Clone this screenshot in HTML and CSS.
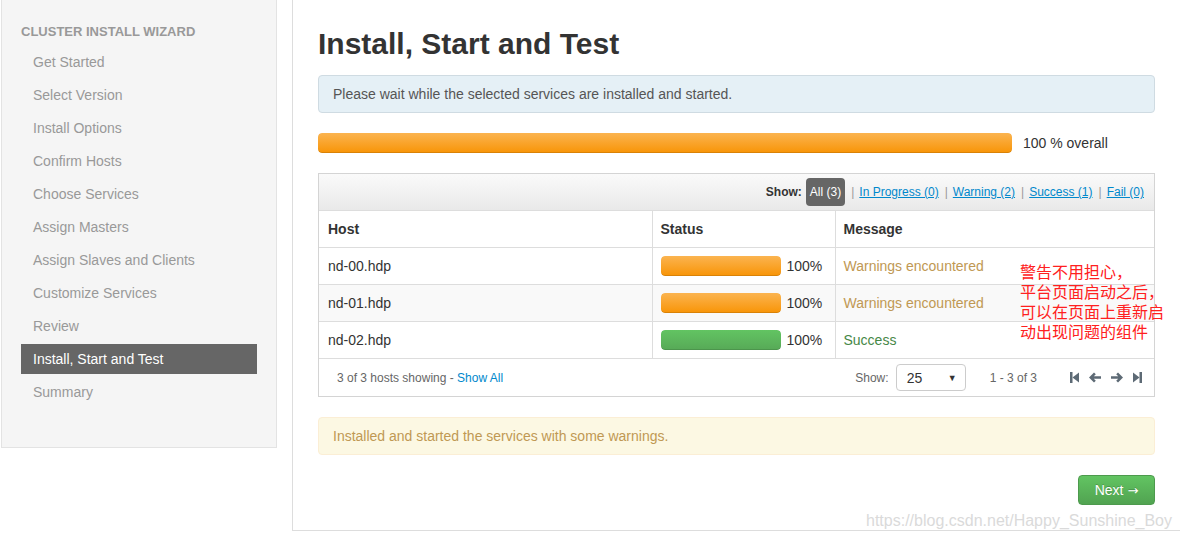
FILE: index.html
```html
<!DOCTYPE html>
<html lang="en">
<head>
<meta charset="utf-8">
<title>Install, Start and Test</title>
<link rel="stylesheet" href="styles.css">
</head>
<body>
<div class="page">
  <aside class="sidebar">
    <div class="nav-header">Cluster Install Wizard</div>
    <ul class="nav">
      <li>Get Started</li>
      <li>Select Version</li>
      <li>Install Options</li>
      <li>Confirm Hosts</li>
      <li>Choose Services</li>
      <li>Assign Masters</li>
      <li>Assign Slaves and Clients</li>
      <li>Customize Services</li>
      <li>Review</li>
      <li class="active">Install, Start and Test</li>
      <li>Summary</li>
    </ul>
  </aside>

  <main class="content">
    <h2 class="title">Install, Start and Test</h2>
    <div class="alert alert-info">Please wait while the selected services are installed and started.</div>

    <div class="overall">
      <div class="progress"><div class="bar bar-warning" style="width:100%"></div></div>
      <span class="overall-label">100 % overall</span>
    </div>

    <div class="hosts-box">
      <div class="filter-bar">
        <span class="filter-label">Show:</span>
        <span class="pill">All (3)</span>
        <span class="sep">|</span><a href="#" class="filter-link">In Progress (0)</a>
        <span class="sep">|</span><a href="#" class="filter-link">Warning (2)</a>
        <span class="sep">|</span><a href="#" class="filter-link">Success (1)</a>
        <span class="sep">|</span><a href="#" class="filter-link">Fail (0)</a>
      </div>
      <table class="hosts">
        <colgroup><col class="col-host"><col class="col-status"><col></colgroup>
        <thead>
          <tr><th>Host</th><th>Status</th><th>Message</th></tr>
        </thead>
        <tbody>
          <tr>
            <td>nd-00.hdp</td>
            <td><div class="status"><div class="progress small"><div class="bar bar-warning" style="width:100%"></div></div><span>100%</span></div></td>
            <td class="msg-warning">Warnings encountered</td>
          </tr>
          <tr class="striped">
            <td>nd-01.hdp</td>
            <td><div class="status"><div class="progress small"><div class="bar bar-warning" style="width:100%"></div></div><span>100%</span></div></td>
            <td class="msg-warning">Warnings encountered</td>
          </tr>
          <tr>
            <td>nd-02.hdp</td>
            <td><div class="status"><div class="progress small"><div class="bar bar-success" style="width:100%"></div></div><span>100%</span></div></td>
            <td class="msg-success">Success</td>
          </tr>
        </tbody>
      </table>
      <div class="table-foot">
        <div class="showing">3 of 3 hosts showing - <a href="#">Show All</a></div>
        <div class="pager">
          <span class="pager-label">Show:</span>
          <div class="select"><span>25</span><span class="caret">&#9660;</span></div>
          <span class="range">1 - 3 of 3</span>
          <span class="pager-icons">
            <svg width="9" height="11" viewBox="0 0 9 11"><rect x="0" y="0" width="2.5" height="11" fill="currentColor"/><polygon points="2.5,5.5 9,0.5 9,10.5" fill="currentColor"/></svg>
            <svg width="12" height="11" viewBox="0 0 12 11"><path d="M0 5.5 L5 0.5 L6.8 2.3 L4.8 4.2 H12 V6.8 H4.8 L6.8 8.7 L5 10.5 Z" fill="currentColor"/></svg>
            <svg width="12" height="11" viewBox="0 0 12 11"><path d="M12 5.5 L7 0.5 L5.2 2.3 L7.2 4.2 H0 V6.8 H7.2 L5.2 8.7 L7 10.5 Z" fill="currentColor"/></svg>
            <svg width="9" height="11" viewBox="0 0 9 11"><polygon points="0,0.5 6.5,5.5 0,10.5" fill="currentColor"/><rect x="6.5" y="0" width="2.5" height="11" fill="currentColor"/></svg>
          </span>
        </div>
      </div>
    </div>

    <div class="alert alert-warning">Installed and started the services with some warnings.</div>

    <div class="actions"><button class="btn-next" type="button">Next <span class="arrow">&rarr;</span></button></div>

    <div class="note">警告不用担心，<br>平台页面启动之后，<br>可以在页面上重新启<br>动出现问题的组件</div>
    <div class="watermark">https://blog.csdn.net/Happy_Sunshine_Boy</div>
  </main>
</div>
</body>
</html>
```
FILE: styles.css
```css
* { box-sizing: border-box; }

body {
  margin: 0;
  font-family: "Liberation Sans", Arial, sans-serif;
  font-size: 14px;
  color: #333;
  background: #fff;
}

.page {
  display: flex;
  align-items: flex-start;
}

/* Sidebar */
.sidebar {
  width: 276px;
  margin-left: 1px;
  background: #f5f5f5;
  border: 1px solid #e3e3e3;
  border-top: none;
  padding: 22px 19px 37px;
}
.nav-header {
  font-size: 13px;
  font-weight: bold;
  color: #999;
  line-height: 20px;
  margin-bottom: 5px;
  text-transform: uppercase;
}
.nav {
  list-style: none;
  margin: 0;
  padding: 0;
}
.nav li {
  height: 30px;
  line-height: 30px;
  padding: 0 12px;
  margin-bottom: 3px;
  color: #999;
}
.nav li.active {
  background: #666;
  color: #fff;
}

/* Main */
.content {
  flex: 1;
  margin-left: 15px;
  border-left: 1px solid #ddd;
  border-bottom: 1px solid #ddd;
  padding: 24px 25px 25px;
  position: relative;
}
.title {
  margin: 0 0 11px;
  font-size: 30px;
  line-height: 40px;
  font-weight: bold;
  color: #333;
}

.alert {
  border: 1px solid;
  border-radius: 4px;
  padding: 8px 14px;
  line-height: 20px;
}
.alert-info {
  background: #e5f0f6;
  border-color: #cfdbe2;
  color: #555;
}
.alert-warning {
  background: #fcf8e3;
  border-color: #fbeed5;
  color: #c09853;
  margin-top: 20px;
}

.overall {
  display: flex;
  align-items: center;
  margin-top: 20px;
}
.overall .progress {
  flex: 1;
}
.overall-label {
  width: 143px;
  padding-left: 11px;
  line-height: 20px;
}

.progress {
  height: 20px;
  border-radius: 4px;
  background: #f5f5f5;
  overflow: hidden;
}
.bar {
  height: 100%;
  border-radius: 4px;
}
.bar-warning {
  background: linear-gradient(to bottom, #fbb450, #f89406);
  box-shadow: inset 0 -1px 0 rgba(0,0,0,0.12);
}
.bar-success {
  background: linear-gradient(to bottom, #62c462, #57a957);
  box-shadow: inset 0 -1px 0 rgba(0,0,0,0.12);
}

/* Hosts box */
.hosts-box {
  margin-top: 20px;
  border: 1px solid #d4d4d4;
}
.filter-bar {
  height: 37px;
  display: flex;
  align-items: center;
  justify-content: flex-end;
  padding-right: 10px;
  background: linear-gradient(to bottom, #fafafa, #e9e9e9);
  border-bottom: 1px solid #ddd;
  font-size: 12px;
}
.filter-label {
  font-weight: bold;
  color: #333;
  margin-right: 4px;
}
.pill {
  background: #666;
  color: #fff;
  border-radius: 4px;
  line-height: 28px;
  padding: 0 4px;
}
.sep {
  color: #999;
  margin: 0 5px 0 6px;
}
.filter-link {
  color: #0088cc;
  text-decoration: underline;
}

.hosts {
  width: 100%;
  border-collapse: collapse;
  table-layout: fixed;
}
.col-host { width: 333px; }
.col-status { width: 183px; }
.hosts th,
.hosts td {
  text-align: left;
  padding: 8px;
  line-height: 20px;
  border-bottom: 1px solid #ddd;
  border-left: 1px solid #ddd;
  white-space: nowrap;
}
.hosts th:first-child,
.hosts td:first-child {
  border-left: none;
  padding-left: 9px;
}
.hosts th { font-weight: bold; }
.hosts tr.striped td { background: #f9f9f9; }
.status {
  display: flex;
  align-items: center;
}
.progress.small {
  width: 120px;
  margin-right: 6px;
}
.msg-warning { color: #c09853; }
.msg-success { color: #468847; }

.table-foot {
  height: 37px;
  display: flex;
  align-items: center;
  justify-content: space-between;
  padding: 0 12px 0 18px;
  font-size: 12px;
  color: #666;
}
.showing a { color: #0088cc; text-decoration: none; }
.pager {
  display: flex;
  align-items: center;
}
.pager-label { margin-right: 7px; }
.select {
  width: 70px;
  height: 27px;
  border: 1px solid #ccc;
  border-radius: 4px;
  display: flex;
  align-items: center;
  justify-content: space-between;
  padding: 0 8px 0 10px;
  font-size: 14px;
  color: #333;
  background: #fff;
}
.caret {
  font-size: 9px;
  color: #333;
}
.range { margin-left: 24px; }
.pager-icons {
  display: flex;
  align-items: center;
  gap: 10px;
  margin-left: 33px;
  color: #5d6a75;
}
.pager-icons svg { display: block; }

.actions {
  display: flex;
  justify-content: flex-end;
  margin-top: 20px;
}
.btn-next {
  height: 30px;
  width: 77px;
  padding: 0;
  font-family: "Liberation Sans", Arial, sans-serif;
  font-size: 14px;
  color: #fff;
  text-shadow: 0 -1px 0 rgba(0,0,0,0.2);
  background: linear-gradient(to bottom, #62c462, #51a351);
  border: 1px solid #4d9a4d;
  border-radius: 4px;
}
.btn-next .arrow {
  font-family: "DejaVu Sans", sans-serif;
  font-size: 13px;
}

.note {
  position: absolute;
  left: 727px;
  top: 261px;
  font-family: "Noto Sans CJK SC", sans-serif;
  font-size: 16px;
  line-height: 20px;
  color: #ff2020;
  white-space: nowrap;
}
.watermark {
  position: absolute;
  right: 8px;
  top: 511px;
  font-size: 16px;
  line-height: 20px;
  color: #dadada;
  white-space: nowrap;
}
```
